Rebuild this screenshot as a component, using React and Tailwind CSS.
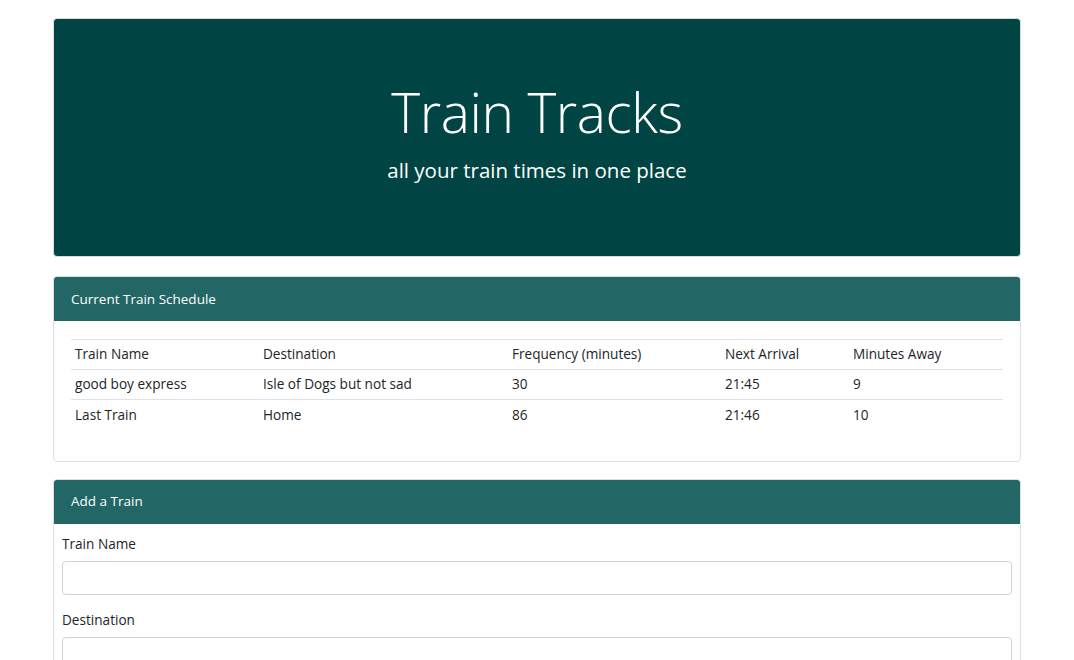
const trains = [
  { name: 'good boy express', destination: 'Isle of Dogs but not sad', frequency: 30, next: '21:45', away: 9 },
  { name: 'Last Train', destination: 'Home', frequency: 86, next: '21:46', away: 10 },
];

const App = () => {
  return (
    <div className="min-h-screen bg-white text-[#212529] font-['Open_Sans',sans-serif]">
      <div className="px-[53px] pt-[18px]">

        {/* Jumbotron */}
        <div className="h-[239px] bg-[#004444] rounded border border-[#dcdcdc] text-white text-center pt-[60px]">
          <h1 className="text-[55px] font-light leading-[1.2] tracking-[-0.4px]">Train Tracks</h1>
          <p className="text-[20.5px] mt-[10px] leading-[30px]">all your train times in one place</p>
        </div>

        {/* Schedule */}
        <div className="mt-[19px] rounded border border-[#dfdfdf] overflow-hidden">
          <div className="bg-[#226666] text-white text-[13.5px] h-[44px] flex items-center px-[17px]">
            Current Train Schedule
          </div>
          <div className="px-[17px] pt-[18px] pb-[31px]">
            <table className="w-full text-[13.6px] border-collapse">
              <thead>
                <tr className="border-t border-b border-[#dee2e6] h-[30px]">
                  <th className="w-[188px] text-left font-normal px-[4px]">Train Name</th>
                  <th className="w-[249px] text-left font-normal px-[4px]">Destination</th>
                  <th className="w-[213px] text-left font-normal px-[4px]">Frequency (minutes)</th>
                  <th className="w-[128px] text-left font-normal px-[4px]">Next Arrival</th>
                  <th className="text-left font-normal px-[4px]">Minutes Away</th>
                </tr>
              </thead>
              <tbody>
                {trains.map((t, i) => (
                  <tr key={t.name} className={`h-[30px] ${i < trains.length - 1 ? 'border-b border-[#dee2e6]' : ''}`}>
                    <td className="px-[4px]">{t.name}</td>
                    <td className="px-[4px]">{t.destination}</td>
                    <td className="px-[4px]">{t.frequency}</td>
                    <td className="px-[4px]">{t.next}</td>
                    <td className="px-[4px]">{t.away}</td>
                  </tr>
                ))}
              </tbody>
            </table>
          </div>
        </div>

        {/* Add a train */}
        <div className="mt-[17px] rounded-t border border-[#dfdfdf] overflow-hidden">
          <div className="bg-[#226666] text-white text-[13.5px] h-[44px] flex items-center px-[17px]">
            Add a Train
          </div>
          <form className="px-[8px] pt-[10px] pb-4 text-[13.6px]">
            <div className="mb-[15px]">
              <label className="block mb-[7px] leading-[20px]">Train Name</label>
              <input className="w-full h-[34px] rounded border border-[#ced4da] px-3" />
            </div>
            <div className="mb-[15px]">
              <label className="block mb-[7px] leading-[20px]">Destination</label>
              <input className="w-full h-[34px] rounded border border-[#ced4da] px-3" />
            </div>
          </form>
        </div>
      </div>
    </div>
  );
};

export default App;
